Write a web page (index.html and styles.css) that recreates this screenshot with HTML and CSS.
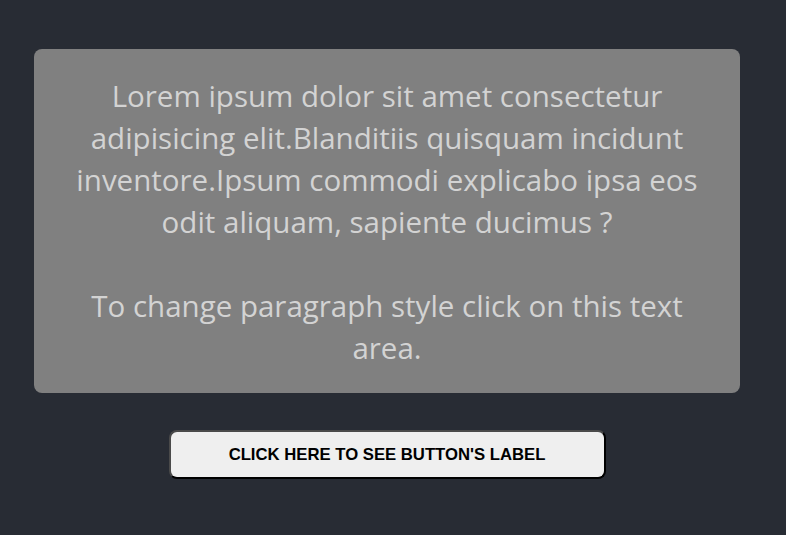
FILE: index.html
```html
<!DOCTYPE html>
<html>
<head>
<meta charset="utf-8">
<link rel="stylesheet" href="styles.css">
</head>
<body>
<main class="page">
  <section class="card">
    <p class="text">Lorem ipsum dolor sit amet consectetur adipisicing elit.Blanditiis quisquam incidunt inventore.Ipsum commodi explicabo ipsa eos odit aliquam, sapiente ducimus ?</p>
    <p class="text">To change paragraph style click on this text area.</p>
  </section>
  <button class="btn">CLICK HERE TO SEE BUTTON'S LABEL</button>
</main>
</body>
</html>
```
FILE: styles.css
```css
html, body {
  margin: 0;
  padding: 0;
  background: #282c34;
  height: 100%;
}
.page {
  display: flex;
  flex-direction: column;
  align-items: center;
  width: 706px;
  padding: 49px 0 0 34px;
}
.card {
  box-sizing: border-box;
  width: 706px;
  height: 344px;
  background: #808080;
  border-radius: 8px;
  padding: 26px 40px 0;
  display: flex;
  flex-direction: column;
  gap: 42px;
}
.text {
  margin: 0;
  font-family: "Open Sans", sans-serif;
  font-size: 29.5px;
  line-height: 42px;
  color: #d3d3d3;
  text-align: center;
}
.btn {
  margin-top: 37px;
  width: 437px;
  height: 49px;
  padding-top: 2px;
  background: #efefef;
  border: 2px solid;
  border-color: #4a4a4a #000 #000 #4a4a4a;
  border-radius: 8px;
  font-family: "Liberation Sans", Arial, sans-serif;
  font-weight: bold;
  font-size: 16.7px;
  color: #000;
}
```
